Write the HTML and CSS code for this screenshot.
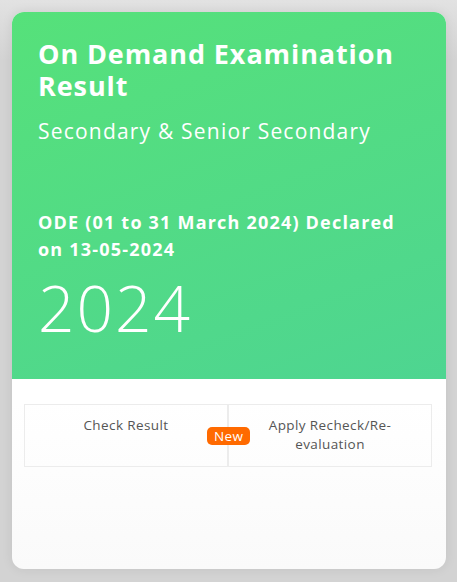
FILE: index.html
```html
<!DOCTYPE html>
<html lang="en">
<head>
    <meta charset="UTF-8">
    <meta name="viewport" content="width=device-width, initial-scale=1.0">
    <title>ODE Result</title>
    <link rel="stylesheet" href="styles.css">
</head>
<body>
    <!-- 结果卡片 -->
    <div class="result-card">
        <div class="card-head">
            <h2 class="title">On Demand Examination Result</h2>
            <p class="subtitle">Secondary &amp; Senior Secondary</p>
            <h3 class="declared">ODE (01 to 31 March 2024) Declared on 13-05-2024</h3>
            <div class="year">2024</div>
        </div>

        <div class="card-body">
            <div class="links">
                <a href="#result" class="link-cell">Check Result</a>
                <a href="#recheck" class="link-cell">Apply Recheck/Re-<br>evaluation</a>
                <span class="badge">New</span>
            </div>
        </div>
    </div>
</body>
</html>
```

FILE: styles.css
```css
/* 全局样式 */
* {
    margin: 0;
    padding: 0;
    box-sizing: border-box;
}

body {
    font-family: "Open Sans", "DejaVu Sans", sans-serif;
    background: linear-gradient(to bottom, #e2e2e2, #d3d3d3 60px);
    padding: 12px 11px 13px 12px;
    height: 100vh;
}

/* 卡片 */
.result-card {
    height: 557px;
    border-radius: 12px;
    overflow: hidden;
    background: linear-gradient(to bottom, #ffffff 70%, #fafafa);
    box-shadow: 0 0 12px rgba(0, 0, 0, 0.08);
    display: flex;
    flex-direction: column;
}

.card-head {
    height: 367px;
    background: linear-gradient(160deg, #56e17a, #4ed591);
    color: white;
    padding: 26px 20px 0 26px;
}

.title {
    font-size: 27px;
    font-weight: 700;
    line-height: 32px;
    letter-spacing: 0.9px;
}

.subtitle {
    font-size: 21px;
    font-weight: 400;
    margin-top: 15px;
    letter-spacing: 1.2px;
}

.declared {
    font-size: 18px;
    font-weight: 700;
    line-height: 27px;
    margin-top: 64px;
    letter-spacing: 1.2px;
}

.year {
    font-size: 64px;
    font-weight: 300;
    line-height: 72px;
    margin-top: 9px;
    letter-spacing: 2px;
}

/* 底部链接 */
.card-body {
    flex: 1;
    padding: 25px 14px 0 12px;
}

.links {
    position: relative;
    display: flex;
    border: 1px solid #ececec;
    height: 63px;
}

.link-cell {
    flex: 1;
    text-align: center;
    font-size: 13.5px;
    line-height: 19px;
    letter-spacing: 0.4px;
    color: #555;
    text-decoration: none;
    padding-top: 11px;
}

.link-cell + .link-cell {
    border-left: 2px solid #ececec;
}

.badge {
    position: absolute;
    left: 182px;
    top: 22px;
    height: 18px;
    background-color: #ff6a00;
    color: white;
    font-size: 13.5px;
    line-height: 18px;
    letter-spacing: 0.4px;
    padding: 0 7px;
    border-radius: 5px;
}
```
